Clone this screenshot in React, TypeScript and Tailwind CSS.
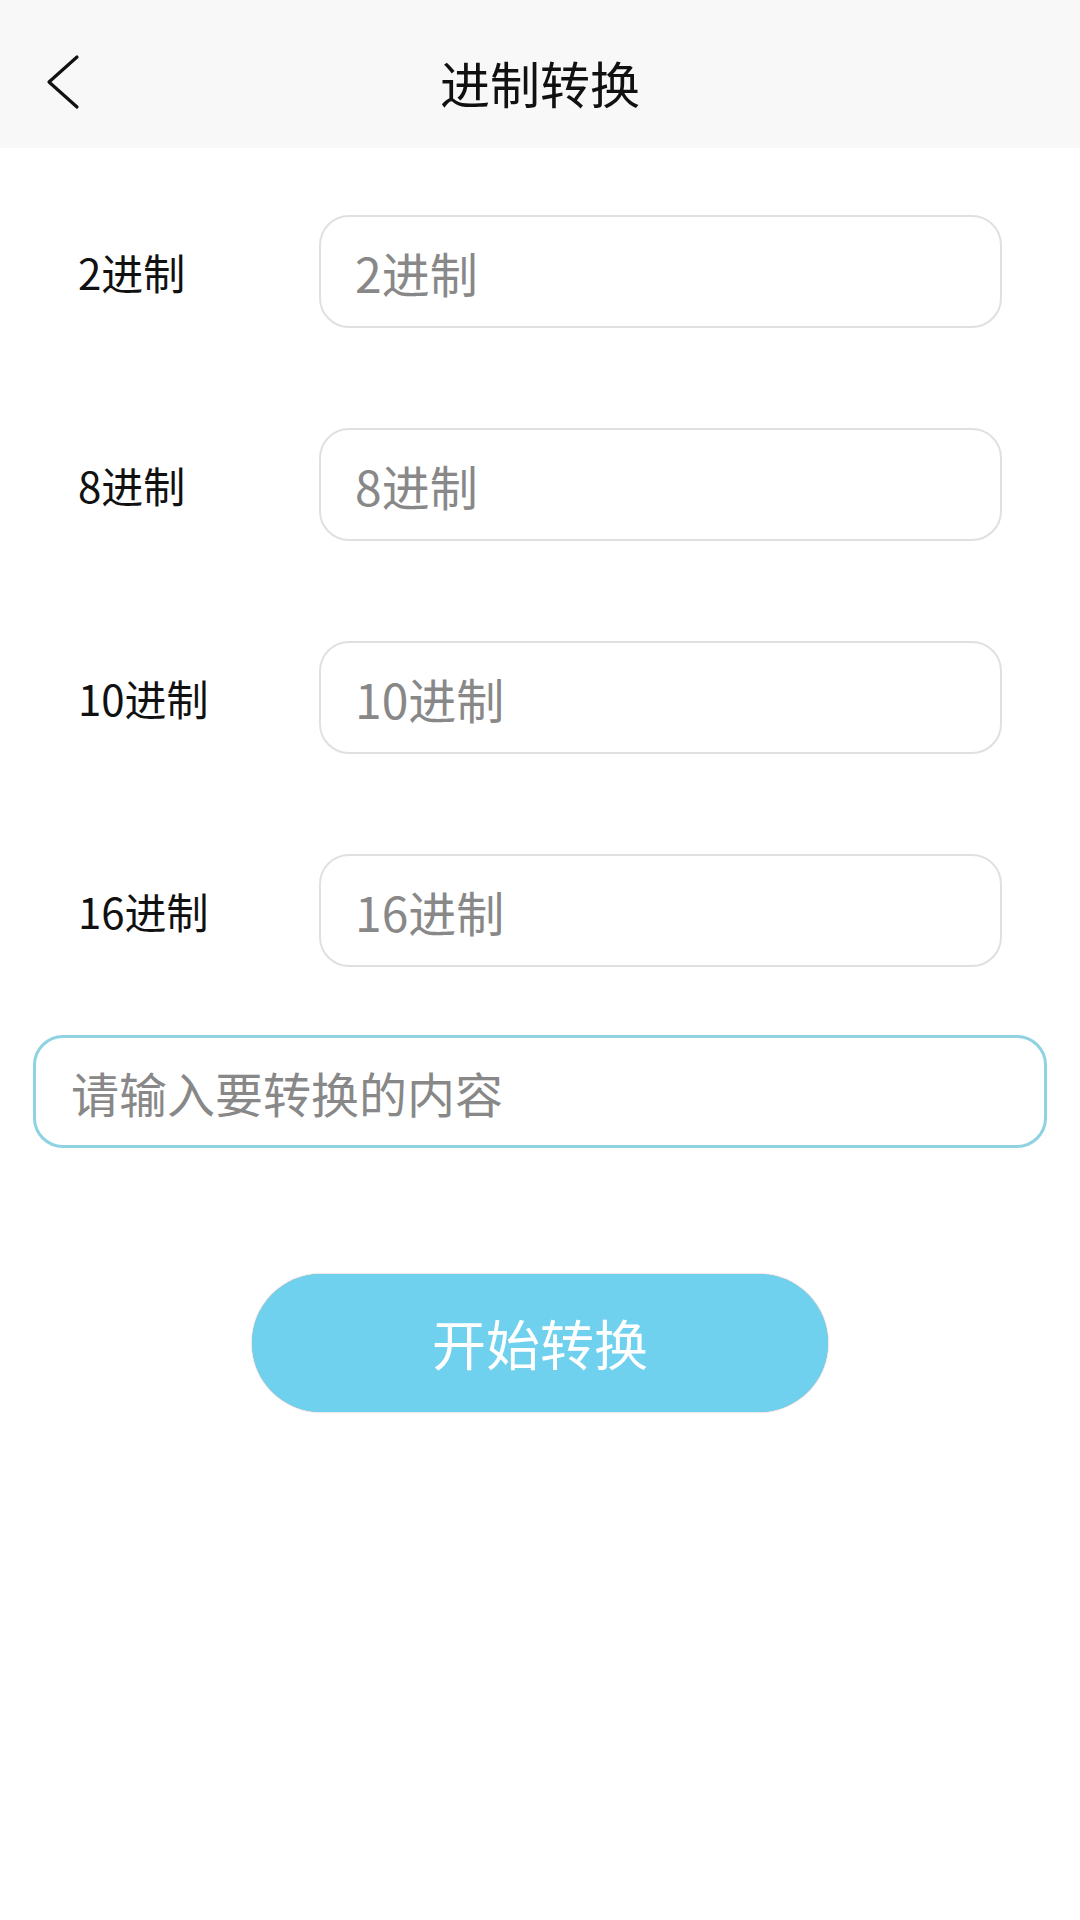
const font = { fontFamily: '"Noto Sans CJK SC", "Noto Sans", sans-serif' };

const rows = [
  { label: "2进制", placeholder: "2进制" },
  { label: "8进制", placeholder: "8进制" },
  { label: "10进制", placeholder: "10进制" },
  { label: "16进制", placeholder: "16进制" },
];

export default function App() {
  return (
    <div className="w-[1080px] min-h-[1920px] bg-white" style={font}>
      {/* top bar */}
      <div className="h-[148px] pt-[16px] bg-[#f8f8f8] grid grid-cols-[1fr_auto_1fr] items-center">
        <div className="pl-[45px] flex items-center">
          <svg width="36" height="56" viewBox="0 0 36 56" fill="none">
            <polyline
              points="32,3 4,28 32,53"
              stroke="#111"
              strokeWidth="3.2"
              strokeLinecap="round"
              strokeLinejoin="round"
            />
          </svg>
        </div>
        <h1 className="text-[50px] leading-none text-[#111] font-normal">进制转换</h1>
        <div />
      </div>

      <div className="mt-[67px] flex flex-col gap-[100px]">
        {rows.map((r) => (
          <div key={r.label} className="flex items-center pl-[78px]">
            <span className="w-[241px] text-[42px] text-[#111] leading-none">{r.label}</span>
            <input
              placeholder={r.placeholder}
              className="w-[683px] h-[113px] rounded-[30px] border-[2.5px] border-[#e0e0e0] pl-[34px] text-[48px] text-[#333] placeholder:text-[#888888] outline-none bg-white"
              style={font}
            />
          </div>
        ))}
      </div>

      <div className="px-[33px] mt-[68px]">
        <input
          placeholder="请输入要转换的内容"
          className="w-full h-[113px] rounded-[30px] border-[3px] border-[#8fd3e3] pl-[35px] text-[48px] text-[#333] placeholder:text-[#888888] outline-none bg-white"
          style={font}
        />
      </div>

      <div className="mt-[126px] flex justify-center">
        <button
          className="w-[576px] h-[138px] rounded-full bg-[#6fd1ee] text-white text-[54px] leading-none shadow-[0_0_1.5px_rgba(0,0,0,0.45)]"
          style={font}
        >
          开始转换
        </button>
      </div>
    </div>
  );
}
